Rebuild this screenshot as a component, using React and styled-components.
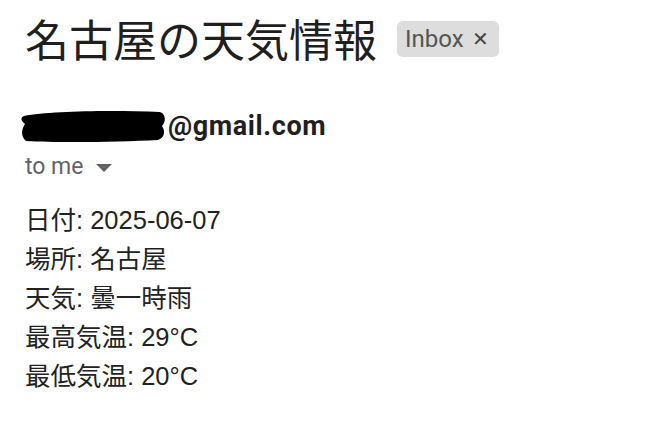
import styled, { createGlobalStyle } from "styled-components";

const GlobalStyle = createGlobalStyle`
  body {
    margin: 0;
    background: #fff;
    font-family: "Liberation Sans", "Noto Sans CJK JP", sans-serif;
  }
`;

const Page = styled.div`
  padding: 12px 25px;
  color: #222;
`;

const Header = styled.div`
  display: flex;
  align-items: center;
  gap: 20px;
`;

const Subject = styled.h1`
  margin: 0;
  font-family: "Noto Sans CJK JP", sans-serif;
  font-weight: 400;
  font-size: 44px;
  line-height: 52px;
  color: #1f1f1f;
`;

const Chip = styled.span`
  display: inline-flex;
  align-items: center;
  gap: 8px;
  height: 36px;
  padding: 0 10px 0 8px;
  border-radius: 6px;
  background: #dddddd;
  color: #555;
  font-family: Roboto, "Liberation Sans", sans-serif;
  font-size: 24px;
  margin-top: 2px;
`;

const Close = styled.span`
  font-size: 20px;
  color: #444;
`;

const Sender = styled.div`
  display: flex;
  align-items: center;
  margin: 44px 0 0 -5px;
  font-family: Roboto, "Liberation Sans", sans-serif;
  font-weight: 700;
  font-size: 27px;
  letter-spacing: 0.6px;
  color: #1f1f1f;
`;

const Recipient = styled.div`
  display: flex;
  align-items: center;
  gap: 12px;
  margin-top: 9px;
  font-family: Roboto, "Liberation Sans", sans-serif;
  font-size: 23px;
  color: #5f6368;
`;

const Caret = styled.span`
  width: 0;
  height: 0;
  border-left: 8px solid transparent;
  border-right: 8px solid transparent;
  border-top: 8px solid #5f6368;
  margin-top: 2px;
`;

const Body = styled.div`
  margin-top: 21px;
  font-size: 25.5px;
  line-height: 39px;
  color: #222;
`;

function Redaction() {
  return (
    <svg width="148" height="36" viewBox="0 0 148 36">
      <path
        d="M4 8 C30 3 90 2 140 4 C146 6 146 14 142 18 C146 24 144 30 138 32 C100 34 40 35 6 33 C0 28 2 20 5 16 C0 12 1 9 4 8 Z"
        fill="#000"
      />
    </svg>
  );
}

export default function App() {
  return (
    <>
      <GlobalStyle />
      <Page>
        <Header>
          <Subject>名古屋の天気情報</Subject>
          <Chip>
            Inbox <Close>✕</Close>
          </Chip>
        </Header>
        <Sender>
          <Redaction />
          @gmail.com
        </Sender>
        <Recipient>
          to me <Caret />
        </Recipient>
        <Body>
          <div>日付: 2025-06-07</div>
          <div>場所: 名古屋</div>
          <div>天気: 曇一時雨</div>
          <div>最高気温: 29°C</div>
          <div>最低気温: 20°C</div>
        </Body>
      </Page>
    </>
  );
}
